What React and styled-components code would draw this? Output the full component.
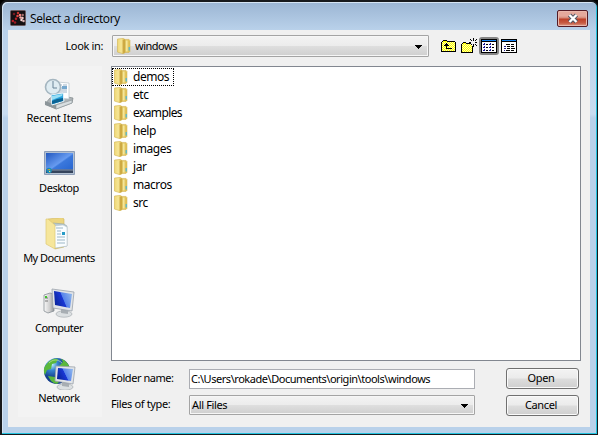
import React from 'react';
import styled, { createGlobalStyle } from 'styled-components';

const Global = createGlobalStyle`
  *{box-sizing:border-box}
  body{margin:0;background:#000;overflow:hidden}
  button,input{font:inherit;color:inherit;margin:0;padding:0}
`;
const Window = styled.main`
  width:598px;height:435px;padding:0 7px 7px 6px;display:flex;flex-direction:column;
  border:solid #17191c;border-width:2px 1px 1px 2px;border-radius:7px 7px 0 0;
  background:linear-gradient(#9bb5d3 0,#b9d1ea 28px,#c9dcf0 112px,#b9d1ea 116px);
  box-shadow:inset -1px -1px #24c3df,inset 1px 1px #d5e4f3;
  color:#000;font:11px/14px "Noto Sans",sans-serif;
`;
const TitleBar = styled.header`
  height:28px;flex:none;display:flex;align-items:center;padding:4px 2px 0;
`;
const Title = styled.h1`
  margin:0 auto 0 4px;padding-top:2px;font:12px/16px "Open Sans",sans-serif;letter-spacing:${p => p.$ls}px;white-space:nowrap;
`;
const Close = styled.button`
  width:31px;height:17px;align-self:flex-start;margin-top:4px;border:1px solid #541b26;border-radius:2px;
  background:linear-gradient(#e5a99c 0 5px,#d58876 7px,#bd4028 8px,#c75b43 12px,#de9b88);
  box-shadow:inset 0 0 0 1px #e9b7ac;display:grid;place-items:center;
`;
const Client = styled.section`
  width:582px;height:397px;background:#f0f0f0;display:grid;
  grid-template-columns:84px 478px;column-gap:9px;grid-template-rows:31px 351px;padding:5px 0 0 10px;
`;
const Toolbar = styled.div`grid-column:1/-1;display:flex;align-items:flex-start;`;
const Label = styled.label`
  width:${p => p.$w}px;text-align:${p => p.$right ? 'right' : 'left'};letter-spacing:${p => p.$ls || 0}px;
  white-space:nowrap;flex:none;padding-top:${p => p.$top || 0}px;margin-right:${p => p.$mr || 0}px;
`;
const Combo = styled.div`
  width:${p => p.$w}px;height:${p => p.$h}px;display:flex;align-items:center;border:1px solid #a4a4a4;border-radius:1px;
  background:linear-gradient(#f3f3f3,#ececec 48%,#dedede 52%,#cfcfcf);box-shadow:inset 0 0 0 1px #f6f6f6;
  padding:0 5px 0 ${p => p.$pad}px;letter-spacing:${p => p.$ls || 0}px;
  >svg:last-child{margin-left:auto;margin-top:3px}
  >span{margin-left:${p => p.$gap || 0}px}
`;
const Tools = styled.div`display:flex;margin-left:10px;align-items:center;height:22px;`;
const Tool = styled.button`
  width:20px;height:18px;border:${p => p.$on ? '2px solid #858585' : '0'};border-radius:3px;
  background:${p => p.$on ? '#e8e8e8' : 'transparent'};display:grid;place-items:center;
`;
const Places = styled.nav`background:#f3f3f3;height:351px;display:flex;flex-direction:column;padding-right:2px;`;
const Place = styled.button`
  height:70px;flex:none;border:0;padding-top:12px;background:transparent;display:flex;flex-direction:column;align-items:center;justify-content:flex-start;
  letter-spacing:${p => p.$ls}px;white-space:nowrap;
  svg{flex:none;margin:0 0 1px 2px}
`;
const Body = styled.div`display:flex;flex-direction:column;`;
const List = styled.ul`
  margin:0;padding:1px 0;list-style:none;width:470px;height:295px;background:#fff;border:1px solid #828790;
  font:12px/18px "Noto Sans",sans-serif;
`;
const Item = styled.li`
  width:62px;height:18px;display:flex;align-items:center;white-space:nowrap;letter-spacing:${p => p.$ls}px;
  outline:${p => p.$focus ? '1px dotted #000' : 'none'};outline-offset:-1px;
  svg{margin:0 5px 0 2px;flex:none}
`;
const FormRow = styled.div`display:flex;width:468px;margin-top:${p => p.$mt}px;height:22px;`;
const Field = styled.input`
  width:286px;height:20px;margin-top:1px;border:1px solid #abadb3;background:#fff;outline:0;padding:0 1px 1px;letter-spacing:${p => p.$ls}px;
`;
const Action = styled.button`
  width:73px;height:21px;margin-left:auto;border:1px solid #707070;border-radius:3px;padding:0 3px 2px 0;
  background:linear-gradient(#f3f3f3,#ebebeb 48%,#ddd 52%,#cfcfcf);box-shadow:inset 0 0 0 1px #fafafa;letter-spacing:${p => p.$ls}px;
`;

const Arrow = () => <svg width="9" height="5" shapeRendering="crispEdges"><path d="M1 0H8V1H7V2H6V3H5V4H4V3H3V2H2V1H1Z" /></svg>;
const Folder = () => (
  <svg width="14" height="16" viewBox="0 0 14 16">
    <defs><linearGradient id="fold"><stop stopColor="#efd775" /><stop offset=".5" stopColor="#f6e696" /><stop offset="1" stopColor="#d6b144" /></linearGradient></defs>
    <path d="M6 1.4h6l1 1v11l-1 1H6Z" fill="#e2c45c" stroke="#cfae4b" strokeWidth=".5" />
    <path d="M8.6 2.5h2v11h-2Z" fill="#f5e699" />
    <path d="m.5 1 6-.6L8 1.7v13l-2 1-5.5-1.6Z" fill="url(#fold)" stroke="#d2b34b" strokeWidth=".6" />
    <path d="m5.7 2 2-.5v13l-2 1Z" fill="#c39b32" opacity=".65" /><path d="M12.2 9v3.6" stroke="#45b8e2" strokeWidth="1.2" />
  </svg>
);
const AppIcon = () => (
  <svg width="16" height="16" viewBox="0 0 16 16"><rect x=".5" y=".5" width="15" height="15" rx="1" fill="#141013" stroke="#6b5b60" />
    {[[2.8, 11, '#b61e29'], [5, 12.6, '#9b1822'], [4, 4, '#791a22'], [6, 8.8, '#b92329'], [8, 3, '#c7352d'], [7.5, 6, '#e84744'], [10, 5, '#f08480'], [10.5, 7.5, '#f7aaa5'], [12.7, 5, '#a4706b'], [12.5, 8, '#f4c4c2'], [11.5, 10, '#f8dad8'], [13.5, 11, '#d8b1b2']].map(([x, y, c]) => <circle key={`${x}-${y}`} cx={x} cy={y} r="1.25" fill={c} />)}
  </svg>
);
const CloseIcon = () => <svg width="12" height="11" viewBox="0 0 12 11"><path d="m2.5 2 7 7m0-7-7 7" stroke="#515766" strokeWidth="4.4" /><path d="m2.5 2 7 7m0-7-7 7" stroke="#fff" strokeWidth="2.4" /></svg>;
const Speckles = ({ x, y, w, h }) => {
  const cells = [];
  for (let r = 0; r < h; r++) for (let c = r % 2; c < w; c += 2) cells.push(`M${x + c} ${y + r}h1v1h-1Z`);
  return <path d={cells.join('')} fill="#ffffb4" />;
};
const UpIcon = () => <svg width="16" height="14" shapeRendering="crispEdges"><path d="M1 3h13v9H1ZM2 2h4v1H2Z" fill="#ffff00" /><Speckles x={1} y={3} w={13} h={9} /><path d="M2 1h4v1H2ZM1 2h1v1H1ZM6 2h8v1H6ZM0 3h1v10H0ZM14 3h1v10h-1ZM0 12h15v1H0Z" /><path d="M5 4h1v6H5ZM5 9h6v1H5ZM4 5h3v1H4ZM3 6h5v1H3Z" /></svg>;
const NewIcon = () => <svg width="16" height="16" shapeRendering="crispEdges"><path d="M1 6h10v8H1ZM2 5h3v1H2Z" fill="#ffff00" /><Speckles x={1} y={6} w={10} h={8} /><path d="M2 4h3v1H2ZM1 5h1v1H1ZM5 5h5v1H5ZM0 6h1v9H0ZM11 8h1v7h-1ZM0 14h12v1H0Z" /><path d="M12 0h1v3h-1ZM12 6h1v3h-1ZM8 4h2v1H8ZM14 4h2v1h-2ZM9 1h1v1H9ZM10 2h1v1h-1ZM15 1h1v1h-1ZM14 2h1v1h-1ZM10 6h1v1h-1ZM14 6h1v1h-1ZM15 7h1v1h-1Z" /></svg>;
const ViewIcon = ({ detail }) => (
  <svg width="16" height="14" shapeRendering="crispEdges"><path d="M0 0h16v14H0Z" /><path d="M1 3h14v10H1Z" fill="#fff" /><path fill="#1685f5" d="M1 1h14v1H1Z" />
    {detail ? <><path d="M5 5h4v1H5ZM10 5h3v1h-3ZM6 7h3v1H6ZM10 7h3v1h-3ZM6 9h3v1H6ZM10 9h4v1h-4ZM5 11h4v1H5ZM10 11h3v1h-3Z" /><path d="M3 7h2v1H3ZM3 9h2v1H3ZM3 11h1v1H3Z" fill="#20208c" /></> : <><path d="M5 5h2v1H5ZM11 5h2v1h-2ZM5 8h2v1H5ZM11 8h2v1h-2ZM5 11h2v1H5ZM11 11h2v1h-2Z" /><path d="M3 4h1v1H3Zm-1 1h2v1H2Zm7-1h1v1H9ZM8 5h2v1H8ZM3 7h1v1H3ZM2 8h2v1H2Zm7-1h1v1H9ZM8 8h2v1H8Zm-5 2h1v1H3Zm-1 1h2v1H2Zm7-1h1v1H9Zm-1 1h2v1H8Z" fill="#191999" /></>}
  </svg>
);
const Grads = () => <defs><linearGradient id="screen" x1="0" y1=".7" x2="1" y2=".3"><stop stopColor="#09249a" /><stop offset=".5" stopColor="#1a38d5" /><stop offset=".54" stopColor="#5683eb" /><stop offset="1" stopColor="#8bb3ec" /></linearGradient><linearGradient id="metal"><stop stopColor="#f9f9f9" /><stop offset=".6" stopColor="#ccc" /><stop offset="1" stopColor="#8d9297" /></linearGradient></defs>;
const PlaceIcon = ({ kind }) => {
  if (kind === 'recent') return <svg width="32" height="32" viewBox="0 0 32 32"><path d="m6 20 7-3 16 3-1 5-16 6-11-5Z" fill="#aeb4b7" stroke="#7e868a" strokeWidth=".7" /><path d="m1 23 11 4v4L1 27Z" fill="#8c9599" /><path d="m12 27 16-5v3l-16 6Z" fill="#d9dfe1" stroke="#899399" strokeWidth=".6" /><path d="m13 4 12 1v16l-12-1Z" fill="#fff" stroke="#b6c2c9" strokeWidth=".7" /><path d="M15 7h3m1 0h4M15 10h8M15 12h8M15 14h8" stroke="#9eb4c6" /><path fill="#76a8ce" d="M18 8h5v3h-5Z" /><circle cx="9" cy="9" r="7.5" fill="#dfecf2" stroke="#a5b6c0" strokeWidth="1.6" /><path d="M9 3v7h4" fill="none" stroke="#688397" /><path d="m7 17 12-2 1 8-12 4Z" fill="#2aa4dd" stroke="#e8f3f9" /><path d="m8 23 5-2 6-1v3l-11 3Z" fill="#0b6394" /><path d="m8 18 10-2v2l-10 4Z" fill="#97def5" /></svg>;
  if (kind === 'desktop') return <svg width="32" height="32" viewBox="0 1 32 32"><defs><linearGradient id="desk" x1="0" y1="0" x2="1" y2="1"><stop stopColor="#2257bf" /><stop offset=".5" stopColor="#679bf0" /><stop offset=".55" stopColor="#3b78dc" /><stop offset="1" stopColor="#2463ce" /></linearGradient></defs><path d="M.5 4.5h30v23H.5Z" fill="#b2c0d1" stroke="#8e9eb7" /><path d="M2 6h27v19H2Z" fill="url(#desk)" /><path d="M2 22.5h27V26H2Z" fill="#34435b" /><path d="M7 23h22" stroke="#8795a9" /><circle cx="5" cy="23.5" r="2.8" fill="#1689bb" /><path d="M3.7 22h1.1v1.2H3.7Z" fill="#f47b29" /><path d="M5 22h1.2v1.2H5Z" fill="#94d42d" /><path d="M5 24h1.2v1H5Z" fill="#ffe458" /></svg>;
  if (kind === 'documents') return <svg width="32" height="32" viewBox="0 0 32 32"><path d="M4 1 18-.5 20 1v28L11 31Z" fill="#ecd57e" stroke="#d1b75d" strokeWidth=".6" /><path d="m9 5 11 1 3 2v20l-12 2Z" fill="#b9cbd1" stroke="#8b9da3" strokeWidth=".5" /><path d="m10 8 9-1 4 2v19l-12 2Z" fill="#f9fdff" stroke="#b7c3c9" strokeWidth=".5" /><path d="M12 10h7M13 13h4M13 16h4M13 19h8M13 22h8M13 25h8" stroke="#9db7c7" /><path d="M18 14h3v3h-3Z" fill="#279bc7" /><path d="M2 1h2l7 6v24l-9-5Z" fill="#f6e69b" stroke="#dec873" strokeWidth=".7" /></svg>;
  const network = kind === 'network';
  return <svg width="34" height="32" viewBox="0 0 34 32"><Grads />
    {network ? <><defs><radialGradient id="globe" cx=".3" cy=".25"><stop stopColor="#c3f4ff" /><stop offset=".45" stopColor="#3684cf" /><stop offset="1" stopColor="#143f8d" /></radialGradient></defs><circle cx="14" cy="13" r="13" fill="url(#globe)" /><path d="M3 7c4-6 9-7 12-6l-2 4-4 1-1 5-4 1-2 5C0 13 1 9 3 7Zm15-6c5 1 9 6 9 12l-3 5-2-7-6-3 4-4ZM5 18l7 1 4 5-2 2C9 25 7 22 5 18Z" fill="#5ab83c" /><path d="M6 5c4-4 9-4 13 0" stroke="#d1f2ad" fill="none" opacity=".6" /></> : <><path d="m1 7 6-2 4 1v17l-6 2-4-2Z" fill="url(#metal)" stroke="#888f96" strokeWidth=".8" /><path d="M2 10h3M2 13h3" stroke="#777" /><path d="M3 8v2" stroke="#40c22b" strokeWidth="2" /></>}
    <g transform={network ? 'translate(1 4)' : 'translate(0 1)'}><ellipse cx="21" cy="25" rx="8" ry="3.2" fill="#dce0e2" stroke="#a8adb1" strokeWidth=".7" /><path d="m18 19 7 1v5l-7-1Z" fill="#a8aeb3" /><path d={network ? 'm12 4 19 1-2 17-18-3Z' : 'M9 0 31 3l-2 19-19-3Z'} fill="#e1e4e7" stroke="#9ba2ab" strokeWidth=".8" /><path d={network ? 'm14 6 15 1-2 12-14-2Z' : 'm11 2 18 3-2 14-15-3Z'} fill="url(#screen)" /></g>
  </svg>;
};

const places = [['recent', 'Recent Items', -.22], ['desktop', 'Desktop', -.4], ['documents', 'My Documents', -.5], ['computer', 'Computer', -.55], ['network', 'Network', -.4]];
const folders = ['demos', 'etc', 'examples', 'help', 'images', 'jar', 'macros', 'src'];
export default function App() {
  return <><Global /><Window>
    <TitleBar><AppIcon /><Title $ls={-.35}>Select a directory</Title><Close aria-label="Close"><CloseIcon /></Close></TitleBar>
    <Client>
      <Toolbar><Label $w={85} $mr={9} $ls={-.35} $right $top={4}>Look in:</Label><Combo $w={317} $h={22} $pad={4} $gap={4} $ls={-.5}><Folder /><span>windows</span><Arrow /></Combo>
        <Tools><Tool aria-label="Up one level"><UpIcon /></Tool><Tool aria-label="New folder"><NewIcon /></Tool><Tool $on aria-label="List"><ViewIcon /></Tool><Tool aria-label="Details"><ViewIcon detail /></Tool></Tools>
      </Toolbar>
      <Places>{places.map(([kind, name, ls]) => <Place key={kind} $ls={ls}><PlaceIcon kind={kind} />{name}</Place>)}</Places>
      <Body><List>{folders.map((name, i) => <Item key={name} $focus={i === 0} $ls={name === 'examples' ? -.6 : -.45}><Folder />{name}</Item>)}</List>
        <FormRow $mt={7}><Label $w={78} $top={3} $ls={-.45}>Folder name:</Label><Field $ls={-.46} defaultValue="C:\Users\rokade\Documents\origin\tools\windows" /><Action $ls={-.4}>Open</Action></FormRow>
        <FormRow $mt={5}><Label $w={78} $top={2} $ls={-.37}>Files of type:</Label><Combo $w={286} $h={20} $pad={2} $ls={-.35}><span>All Files</span><Arrow /></Combo><Action $ls={-.35}>Cancel</Action></FormRow>
      </Body>
    </Client>
  </Window></>;
}
